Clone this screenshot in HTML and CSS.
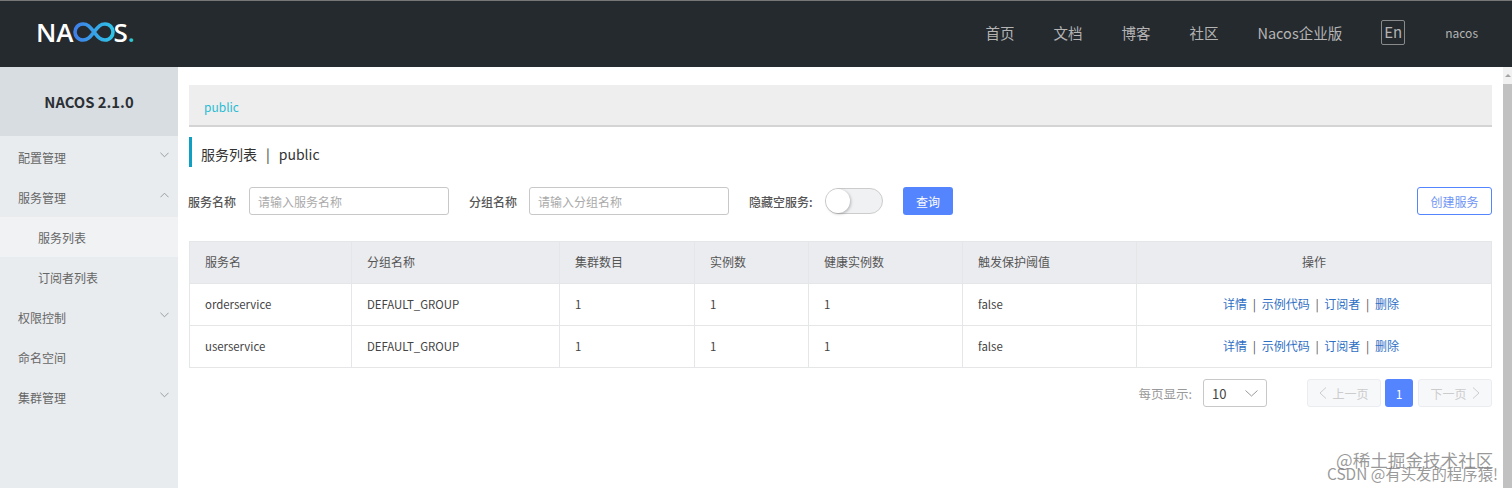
FILE: index.html
```html
<!DOCTYPE html>
<html lang="zh-CN">
<head>
    <meta charset="UTF-8">
    <meta name="viewport" content="width=device-width, initial-scale=1.0">
    <title>Nacos</title>
    <link rel="stylesheet" href="styles.css">
</head>
<body>
    <header class="topbar">
        <div class="logo">
            <span>NA</span>
            <svg class="logo-loop" width="42" height="20" viewBox="0 0 42 20">
                <defs>
                    <linearGradient id="loop" x1="0" x2="1" y1="0" y2="0">
                        <stop offset="0" stop-color="#3f7fe8"/>
                        <stop offset="1" stop-color="#2fc4e6"/>
                    </linearGradient>
                </defs>
                <path d="M21 10C17 5 15 2 10 2C5 2 2 6 2 10C2 14 5 18 10 18C15 18 17 15 21 10C25 5 27 2 32 2C37 2 40 6 40 10C40 14 37 18 32 18C27 18 25 15 21 10Z" fill="none" stroke="url(#loop)" stroke-width="3.600"/>
            </svg>
            <span>S</span><span class="logo-dot">.</span>
        </div>
        <nav class="topnav">
            <a>首页</a>
            <a>文档</a>
            <a>博客</a>
            <a>社区</a>
            <a>Nacos企业版</a>
            <span class="lang">En</span>
            <span class="user">nacos</span>
        </nav>
    </header>

    <div class="layout">
        <aside class="sidebar">
            <div class="version">NACOS 2.1.0</div>
            <ul class="menu">
                <li class="menu-item">配置管理
                    <svg class="chev" viewBox="0 0 10 6"><path d="M.5.500L5 5 9.500.500"/></svg>
                </li>
                <li class="menu-item">服务管理
                    <svg class="chev" viewBox="0 0 10 6"><path d="M.5 5.500L5 1l4.500 4.500"/></svg>
                </li>
                <li class="menu-item sub active">服务列表</li>
                <li class="menu-item sub">订阅者列表</li>
                <li class="menu-item">权限控制
                    <svg class="chev" viewBox="0 0 10 6"><path d="M.5.500L5 5 9.500.500"/></svg>
                </li>
                <li class="menu-item">命名空间</li>
                <li class="menu-item">集群管理
                    <svg class="chev" viewBox="0 0 10 6"><path d="M.5.500L5 5 9.500.500"/></svg>
                </li>
            </ul>
        </aside>

        <main class="content">
            <div class="crumb"><a>public</a></div>
            <h1 class="page-title">服务列表<span class="sep">|</span>public</h1>

            <div class="filters">
                <label class="field-label">服务名称</label>
                <input class="text-input" placeholder="请输入服务名称">
                <label class="field-label second">分组名称</label>
                <input class="text-input" placeholder="请输入分组名称">
                <label class="field-label third">隐藏空服务:</label>
                <span class="switch"><span class="knob"></span></span>
                <button class="btn primary">查询</button>
                <button class="btn outline">创建服务</button>
            </div>

            <table class="services">
                <colgroup>
                    <col class="c1"><col class="c2"><col class="c3"><col class="c4"><col class="c5"><col class="c6"><col>
                </colgroup>
                <thead>
                    <tr>
                        <th>服务名</th>
                        <th>分组名称</th>
                        <th>集群数目</th>
                        <th>实例数</th>
                        <th>健康实例数</th>
                        <th>触发保护阈值</th>
                        <th class="center">操作</th>
                    </tr>
                </thead>
                <tbody>
                    <tr>
                        <td class="latin">orderservice</td>
                        <td class="latin">DEFAULT_GROUP</td>
                        <td class="latin">1</td>
                        <td class="latin">1</td>
                        <td class="latin">1</td>
                        <td class="latin">false</td>
                        <td class="actions"><a>详情</a><i>|</i><a>示例代码</a><i>|</i><a>订阅者</a><i>|</i><a>删除</a></td>
                    </tr>
                    <tr>
                        <td class="latin">userservice</td>
                        <td class="latin">DEFAULT_GROUP</td>
                        <td class="latin">1</td>
                        <td class="latin">1</td>
                        <td class="latin">1</td>
                        <td class="latin">false</td>
                        <td class="actions"><a>详情</a><i>|</i><a>示例代码</a><i>|</i><a>订阅者</a><i>|</i><a>删除</a></td>
                    </tr>
                </tbody>
            </table>

            <div class="pager">
                <span class="pager-label">每页显示:</span>
                <span class="page-size">10
                    <svg width="13" height="7" viewBox="0 0 13 7"><path d="M.5.500L6.500 6 12.500.500"/></svg>
                </span>
                <span class="page-btn wide first">
                    <svg width="8" height="12" viewBox="0 0 8 12"><path d="M7 .5L1 6l6 5.500"/></svg>上一页
                </span>
                <span class="page-btn current">1</span>
                <span class="page-btn wide last">下一页
                    <svg width="8" height="12" viewBox="0 0 8 12"><path d="M1 .5L7 6l-6 5.500"/></svg>
                </span>
            </div>
        </main>

        <div class="scrollbar">
            <span class="arrow"></span>
            <span class="thumb"></span>
        </div>
    </div>

    <div class="mark mark-top">@稀土掘金技术社区</div>
    <div class="mark mark-bottom">CSDN @有头发的程序猿!</div>
</body>
</html>
```

FILE: styles.css
```css
* {
    box-sizing: border-box;
}

html, body {
    height: 100%;
}

body {
    margin: 0;
    display: flex;
    flex-direction: column;
    overflow: hidden;
    font-family: "Noto Sans CJK SC", "Noto Sans", sans-serif;
    font-size: 12px;
    color: #333;
    background: #fff;
}

/* top bar */
.topbar {
    height: 67px;
    flex: none;
    display: flex;
    align-items: center;
    justify-content: space-between;
    padding: 0 34px 4px 36px;
    background: #252a2f;
    border-top: 1px solid #777;
}

.logo {
    display: flex;
    align-items: center;
    font-family: "Open Sans", sans-serif;
    font-size: 26px;
    font-weight: 600;
    color: #fff;
    line-height: 1;
}

.logo-loop {
    margin: 0 -1px 0 -1px;
}

.logo-dot {
    color: #2fc4d8;
}

.topnav {
    display: flex;
    align-items: center;
    color: #b4b4b4;
    font-size: 14.500px;
}

.topnav a {
    margin-right: 39px;
}

.lang {
    width: 24px;
    height: 25px;
    margin-right: 40px;
    border: 1px solid #8a8a8a;
    border-radius: 2px;
    text-align: center;
    line-height: 22px;
    font-size: 15px;
}

.user {
    font-size: 12px;
}

/* page body */
.layout {
    flex: 1;
    display: flex;
    min-height: 0;
}

.sidebar {
    width: 178px;
    flex: none;
    background: #e9ecef;
}

.version {
    height: 69px;
    background: #d8dde1;
    text-align: center;
    line-height: 70px;
    font-size: 14.800px;
    font-weight: 700;
    color: #2b3034;
}

.menu {
    list-style: none;
    margin: 0;
    padding: 1px 0 0;
}

.menu-item {
    height: 40px;
    display: flex;
    align-items: center;
    justify-content: space-between;
    padding: 0 9px 0 18px;
    color: #666;
}

.menu-item.sub {
    padding-left: 38px;
}

.menu-item.active {
    background: #f0f2f4;
}

.chev {
    width: 9px;
    height: 6px;
    margin-bottom: 4px;
}

.chev path {
    fill: none;
    stroke: #8f959a;
    stroke-width: 1;
}

.content {
    flex: 1;
    min-width: 0;
    padding: 18px 0 0 11px;
}

.crumb {
    height: 42px;
    padding-left: 15px;
    background: #eee;
    border-bottom: 2px solid #d4d4d4;
    line-height: 43px;
    color: #2bbcd4;
}

.page-title {
    height: 30px;
    margin: 10px 0 20px;
    padding-left: 9px;
    border-left: 3px solid #0e9fc2;
    font-size: 14px;
    font-weight: 400;
    line-height: 35px;
    color: #333;
}

.sep {
    margin: 0 9px;
}

.filters {
    display: flex;
    align-items: center;
    height: 28px;
    margin-left: -1px;
}

.field-label {
    width: 48px;
    margin-right: 13px;
    font-weight: 500;
    color: #555;
    white-space: nowrap;
}

.field-label.second {
    margin-left: 20px;
    margin-right: 12px;
}

.field-label.third {
    width: 64px;
    margin-left: 20px;
    margin-right: 12px;
}

.text-input {
    width: 200px;
    height: 28px;
    padding: 0 8px;
    border: 1px solid #c8c8c8;
    border-radius: 3px;
    outline: none;
    font: inherit;
}

.text-input::placeholder {
    color: #aaa;
}

.switch {
    width: 58px;
    height: 26px;
    padding: 0;
    background: #f0f1f3;
    border: 1px solid #ccc;
    border-radius: 13px;
}

.knob {
    display: block;
    width: 24px;
    height: 24px;
    background: #fff;
    border-radius: 50%;
    box-shadow: 1px 1px 3px rgba(0, 0, 0, 0.25);
}

.btn {
    height: 28px;
    border-radius: 3px;
    font: inherit;
}

.btn.primary {
    width: 50px;
    margin-left: 20px;
    background: #5584ff;
    border: none;
    color: #fff;
}

.btn.outline {
    width: 75px;
    margin-left: auto;
    background: #fff;
    border: 1px solid #5584ff;
    color: #6f95f5;
}

/* table */
.services {
    width: 1303px;
    margin-top: 26px;
    table-layout: fixed;
    border-collapse: collapse;
}

.c1 { width: 162px; }
.c2 { width: 208px; }
.c3 { width: 135px; }
.c4 { width: 114px; }
.c5 { width: 154px; }
.c6 { width: 174px; }

.services th,
.services td {
    height: 42px;
    padding: 0 15px 2px;
    border: 1px solid #e4e6e8;
    text-align: left;
    font-weight: 400;
    color: #444;
}

.services th {
    background: #ebecf0;
    color: #555;
}

.services td.latin {
    font-size: 11.400px;
}

.services .center {
    text-align: center;
}

.services .actions {
    text-align: center;
    padding-right: 21px;
}

.services a {
    color: #2f6fc4;
}

.services i {
    margin: 0 5.700px;
    font-style: normal;
    color: #555;
}

/* pagination */
.pager {
    display: flex;
    align-items: center;
    width: 1303px;
    height: 28px;
    margin-top: 11px;
    justify-content: flex-end;
}

.pager-label {
    margin-right: 11px;
    font-size: 12.500px;
    color: #999;
}

.page-size {
    width: 64px;
    height: 28px;
    display: flex;
    align-items: center;
    justify-content: space-between;
    padding: 0 8px 0 8px;
    border: 1px solid #c8c8c8;
    border-radius: 3px;
    font-size: 13px;
    color: #444;
}

.page-size path,
.page-btn path {
    fill: none;
    stroke: #999;
}

.page-btn {
    height: 28px;
    display: flex;
    align-items: center;
    justify-content: center;
    gap: 5px;
    border-radius: 3px;
    margin-left: 4px;
}

.page-btn.wide {
    width: 74px;
    background: #f7f8fa;
    border: 1px solid #ebecf0;
    color: #ccc;
}

.page-btn.wide path {
    stroke: #ccc;
}

.page-btn.first {
    margin-left: 40px;
}

.page-btn.last {
    margin-left: 5px;
}

.page-btn.current {
    width: 28px;
    background: #5584ff;
    color: #fff;
}

/* scrollbar */
.scrollbar {
    width: 20px;
    flex: none;
    display: flex;
    flex-direction: column;
    align-items: flex-end;
}

.scrollbar .arrow {
    width: 9px;
    height: 17px;
    display: flex;
    justify-content: center;
    padding-top: 7px;
    background: #f1f1f1;
}

.scrollbar .arrow::before {
    content: "";
    height: 0;
    border: 3px solid transparent;
    border-top: 0;
    border-bottom: 3px solid #a3a3a3;
}

.thumb {
    flex: 1;
    width: 9px;
    background: #c1c1c1;
}

/* watermarks */
.mark {
    position: absolute;
    white-space: nowrap;
    color: rgba(120, 120, 120, 0.75);
}

.mark-top {
    left: 1336px;
    top: 447px;
    font-size: 17.600px;
}

.mark-bottom {
    left: 1327px;
    top: 462px;
    font-size: 15.400px;
}
```
